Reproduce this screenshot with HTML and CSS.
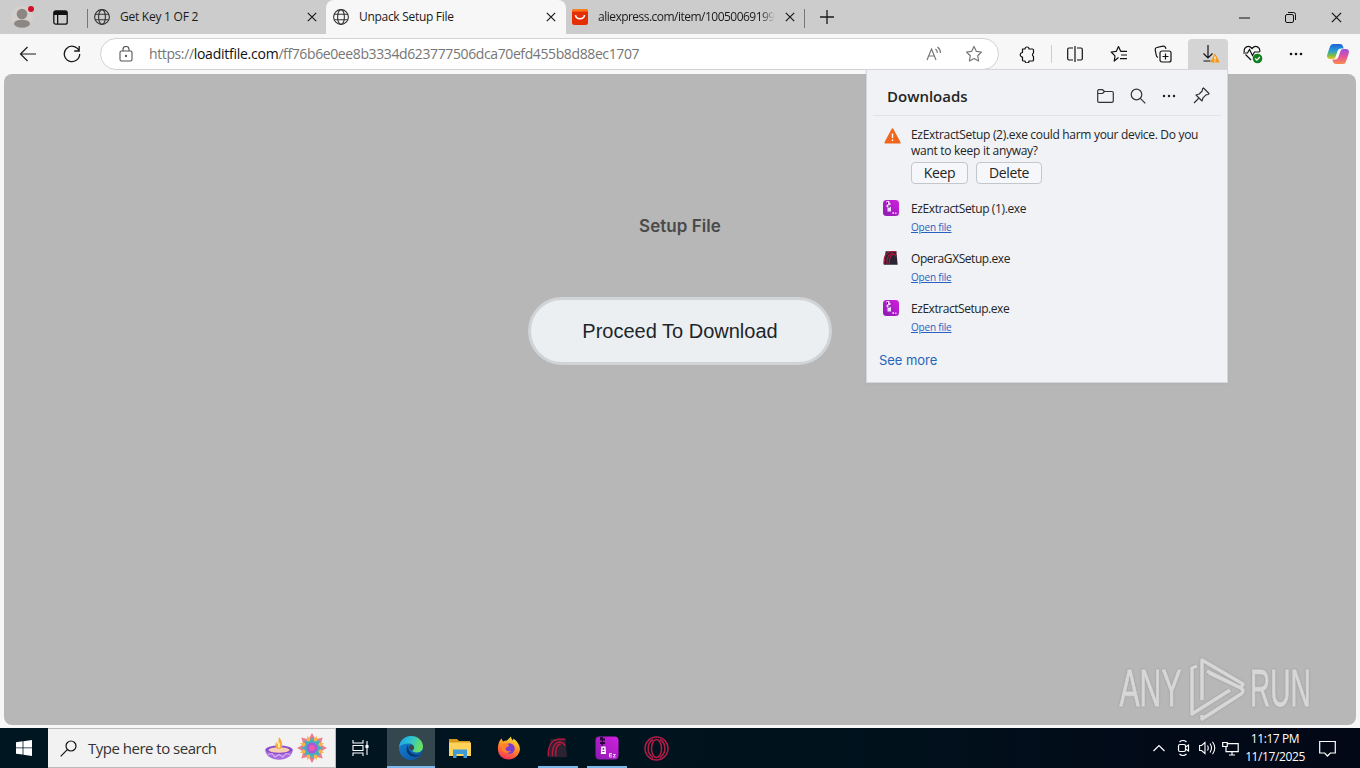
FILE: index.html
```html
<!DOCTYPE html>
<html lang="en">
<head>
<meta charset="utf-8">
<title>Unpack Setup File</title>
<link rel="stylesheet" href="styles.css">
</head>
<body>
<svg class="defs" width="0" height="0">
  <defs>
    <linearGradient id="gEdge" x1="0" y1="0" x2="1" y2=".3"><stop offset="0" stop-color="#1b9de2"/><stop offset=".5" stop-color="#2cc3d2"/><stop offset="1" stop-color="#6adf62"/></linearGradient>
    <linearGradient id="gEdge2" x1="0" y1="0" x2="1" y2="1"><stop offset="0" stop-color="#1686d9"/><stop offset="1" stop-color="#0b4f9e"/></linearGradient>
    <linearGradient id="gEz" x1="0" y1="1" x2="1" y2="0"><stop offset="0" stop-color="#8a1bb0"/><stop offset="1" stop-color="#d31fe0"/></linearGradient>
    <linearGradient id="gFox" x1=".7" y1="0" x2=".3" y2="1"><stop offset="0" stop-color="#ffe63c"/><stop offset=".45" stop-color="#ff9226"/><stop offset="1" stop-color="#fa2c5c"/></linearGradient>
    <linearGradient id="gCop1" x1="0" y1="0" x2="0" y2="1"><stop offset="0" stop-color="#1b62d8"/><stop offset=".45" stop-color="#2a9bd9"/><stop offset=".75" stop-color="#72bf4a"/><stop offset="1" stop-color="#f0c020"/></linearGradient>
    <linearGradient id="gCop2" x1="0" y1="0" x2="0" y2="1"><stop offset="0" stop-color="#9a4fe0"/><stop offset=".5" stop-color="#e4549b"/><stop offset="1" stop-color="#fb8a4c"/></linearGradient>
    <symbol id="globe" viewBox="0 0 16 16"><g fill="none" stroke="#333" stroke-width="1.1"><circle cx="8" cy="8" r="7.4"/><ellipse cx="8" cy="8" rx="3.4" ry="7.4"/><path d="M1.2 5.3h13.6M1.2 10.7h13.6"/></g></symbol>
    <symbol id="x" viewBox="0 0 10 10"><path d="M.8.8l8.4 8.4M9.2.8L.8 9.2" fill="none" stroke="#1a1a1a" stroke-width="1.2"/></symbol>
    <symbol id="ez" viewBox="0 0 24 24"><rect x=".5" y=".5" width="23" height="23" rx="4" fill="url(#gEz)"/><path d="M5 1h3v1.500h2v2H8V6h2v2H8v1.500H6.500V8H5V6h2V4.500H5z" fill="#28053a"/><path d="M6.300 10.500h4.200l.5 7.500H5.800z" fill="#fff"/><path d="M7.600 12h1.600v1.800H7.600zM7.300 15h2.200v1H7.300z" fill="#8a1bb0"/><path d="M17 17.500h-2.500v3.500H17M14.500 19.200H17M18 18.500h2.500L18 21h2.700" fill="none" stroke="#f4d8ff" stroke-width=".9"/></symbol>
    <symbol id="ezs" viewBox="0 0 16 16"><rect width="16" height="16" rx="3.500" fill="url(#gEz)"/><path d="M3.500 1h3v2h1v2h-1v2h1.500v4.500H4.500V7h-1V5h1V3h-1z" fill="#f0d8fb"/><path d="M4 2h1v2H4zM5.500 5h1v3h-1z" fill="#5d177d"/><path d="M9.500 12h1.500v2H9.500zM12 12.500h1.500V14H12z" fill="#f0c8fa"/></symbol>
    <symbol id="gx" viewBox="0 0 24 24"><path d="M4 2h16l2 20H1z" fill="#2b2331"/><path d="M1.500 21C1 10 5 3 13 2.500h7M6 21C5.500 11 9 6 14 5.500c3 0 4.500 2 6 4M9.500 21C9 12 11 8 15 7.500" fill="none" stroke="#b0183c" stroke-width="1.700"/></symbol>
  </defs>
</svg>

<header class="tabs">
  <div class="cell avatar"><svg width="24" height="26" viewBox="0 0 24 26"><circle cx="12" cy="13" r="11" fill="#d3d0cd"/><circle cx="12" cy="10" r="5.300" fill="#8c8782"/><ellipse cx="12" cy="19.700" rx="8" ry="4" fill="#8c8782"/><circle cx="21" cy="5" r="3" fill="#d20f25"/></svg></div>
  <div class="cell work"><svg width="15" height="15" viewBox="0 0 15 15"><rect x=".8" y=".8" width="13.400" height="13.400" rx="2" fill="none" stroke="#111" stroke-width="1.300"/><path d="M1 1h13v4H1zM4 5h1.300v9H4z" fill="#111"/></svg></div>
  <i class="sep"></i>
  <div class="tab first"><svg width="16" height="16"><use href="#globe"/></svg><span class="title key">Get Key 1 OF 2</span><svg class="x" width="10" height="10"><use href="#x"/></svg></div>
  <div class="tab active"><svg width="16" height="16"><use href="#globe"/></svg><span class="title unpack">Unpack Setup File</span><svg class="x" width="10" height="10"><use href="#x"/></svg></div>
  <div class="tab last"><svg width="16" height="16" viewBox="0 0 16 16"><rect width="16" height="16" rx="2.500" fill="#e62e04"/><path d="M2.500 0h11A2.500 2.500 0 0 1 16 2.500H0A2.500 2.500 0 0 1 2.500 0" fill="#ff7a1a"/><path d="M3.500 6c.4 5 8.600 5 9 0" fill="none" stroke="#fff" stroke-width="1.500"/></svg><span class="title ali">aliexpress.com/item/10050069199</span><svg class="x" width="10" height="10"><use href="#x"/></svg></div>
  <i class="sep"></i>
  <div class="cell plus"><svg width="14" height="14" viewBox="0 0 14 14"><path d="M7 0v14M0 7h14" stroke="#1a1a1a" stroke-width="1.300"/></svg></div>
  <div class="window">
    <svg width="11" height="11" viewBox="0 0 11 11"><path d="M0 6h11" stroke="#111"/></svg>
    <svg width="11" height="11" viewBox="0 0 11 11" fill="none" stroke="#111"><rect x=".5" y="2.500" width="8" height="8" rx="1.500"/><path d="M3 .5h5.500a2 2 0 0 1 2 2V8"/></svg>
    <svg width="11" height="11"><use href="#x"/></svg>
  </div>
</header>

<nav class="bar">
  <div class="cell back"><svg width="18" height="16" viewBox="0 0 18 16" fill="none" stroke="#1a1a1a" stroke-width="1.200"><path d="M17 8H1.500M8.500 1l-7 7 7 7"/></svg></div>
  <div class="cell reload"><svg width="18" height="18" viewBox="0 0 18 18" fill="none" stroke="#1a1a1a" stroke-width="1.300"><path d="M15.900 5.500A7.700 7.700 0 1 0 16.700 9M16.200 1v5h-5"/></svg></div>
  <div class="address">
    <svg class="lock" width="14" height="16" viewBox="0 0 14 16" fill="none" stroke="#555" stroke-width="1.100"><rect x="1" y="5" width="12" height="10" rx="1.500"/><path d="M4 5V3.500a3 3 0 0 1 6 0V5"/><circle cx="7" cy="10" r=".6" fill="#555"/></svg>
    <span class="url">https://<b>loaditfile.com</b>/ff76b6e0ee8b3334d623777506dca70efd455b8d88ec1707</span>
    <svg class="read" width="17" height="16" viewBox="0 0 17 16" fill="none" stroke="#777" stroke-width="1.200"><path d="M1 14L5.500 3 10 14M2.700 10h5.700M9.500 3c1.200 1 1.800 2.300 1.900 4M11.500 1c2 1.500 3 3.500 3 6"/></svg>
    <svg width="18" height="18" viewBox="0 0 18 18" fill="none" stroke="#777" stroke-width="1.200" stroke-linejoin="round"><path d="M9 1.500l2.300 4.800 5.200.7-3.800 3.700.9 5.300L9 13.500 4.400 16l.9-5.300L1.500 7l5.200-.7z"/></svg>
  </div>
  <div class="tools">
    <div class="tool ext"><svg width="17" height="17" viewBox="0 0 17 17" fill="none" stroke="#111" stroke-width="1.200" stroke-linejoin="round"><path d="M3.500 3H6a2 2 0 0 1 4 0h3.500q1 0 1 1v3a2 2 0 0 0 0 3.500V14q0 1-1 1H10a2 2 0 0 1-4 0H4.500q-1 0-1-1v-3a2 2 0 0 1 0-4.500z"/></svg></div>
    <i class="rule"></i>
    <div class="tool"><svg width="16" height="16" viewBox="0 0 16 16" fill="none" stroke="#111" stroke-width="1.200"><path d="M8 0v16M6 2H2Q.7 2 .7 3.500v9Q.7 14 2 14h4M10 2h4q1.300 0 1.300 1.500v9Q15.300 14 14 14h-4"/></svg></div>
    <div class="tool"><svg width="18" height="18" viewBox="0 0 18 18" fill="none" stroke="#111" stroke-width="1.200" stroke-linejoin="round"><path d="M8.500 12.500L4.200 16l.8-5.200L1.200 7l5.100-.7L8.500 1.500l2.200 4.800H17M11 10h6M10 13.700h7"/></svg></div>
    <div class="tool"><svg width="18" height="18" viewBox="0 0 18 18" fill="none" stroke="#111" stroke-width="1.200"><rect x="6" y="6" width="11" height="11" rx="2"/><path d="M11.500 8.500v6M8.500 11.500h6M4 12.500Q2.500 12 2.200 10L1.200 4.800Q1 3 2.800 2.500L9 1.200q2-.2 2.700 1.800l.2.800"/></svg></div>
    <div class="tool download"><svg width="20" height="20" viewBox="0 0 20 20" fill="none" stroke="#111" stroke-width="1.200"><path d="M8 1v13M3.500 9.500L8 14l4.500-4.500M3.500 17h7"/><path d="M15 10.500l4 7.500h-8z" fill="#f49b1e" stroke="#f49b1e" stroke-linejoin="round"/><path d="M15 12.500v3M15 16.500v1" stroke="#fff"/></svg></div>
    <div class="tool heart"><svg width="20" height="20" viewBox="0 0 20 20" fill="none" stroke="#111" stroke-width="1.200"><path d="M8 16L2.500 10.500M1.300 8C.3 3 5.500.5 9 4.500 12.500.5 17.700 3 16.700 8M0 9h4.500L6.500 5.500l3 6L11.500 8h5"/><circle cx="14.500" cy="14.500" r="4.800" fill="#128020" stroke="none"/><path d="M12.200 14.500l1.700 1.700 3-3.200" stroke="#fff"/></svg></div>
    <div class="tool more"><svg width="14" height="4" viewBox="0 0 14 4" fill="#111"><circle cx="2" cy="2" r="1.300"/><circle cx="7" cy="2" r="1.300"/><circle cx="12" cy="2" r="1.300"/></svg></div>
    <div class="tool copilot"><svg width="22" height="20" viewBox="0 0 22 20"><path d="M6 0h7c2 0 2.500 1 3 2.500l.7 2H14c-2 0-2.700.8-3.300 2.500L8.500 13Q8 15 5.500 15H3c-2.500 0-3.500-2-2.700-4.500L3 2.500Q3.700 0 6 0" fill="url(#gCop1)"/><path d="M16 20H9c-2 0-2.500-1-3-2.500l-.7-2H8c2 0 2.700-.8 3.300-2.500L13.500 7q.5-2 3-2H19c2.500 0 3.500 2 2.700 4.500L19 17.500q-.7 2.500-3 2.500" fill="url(#gCop2)"/><path d="M10.700 7L9 12.500h2.300L13 7z" fill="#fff"/></svg></div>
  </div>
</nav>

<main class="frame">
  <section class="page">
    <h1>Setup File</h1>
    <button class="proceed">Proceed To Download</button>
    <svg class="mark" width="200" height="72" viewBox="0 0 200 72">
      <g class="marktext"><text transform="translate(5.500 54) scale(.58 1)">ANY</text><text transform="translate(136 54) scale(.54 1)">RUN</text></g>
      <g fill="none" stroke="#d7d7d7" stroke-width="3.500" stroke-linejoin="round"><path d="M88 48V8l41 24-2 4-32-15"/><path d="M83 14l-5 2v46l38-24"/><path d="M88 63v4l39-25q4-3 0-6L93 19"/></g>
    </svg>
  </section>
</main>

<aside class="popup">
  <div class="phead">
    <h2>Downloads</h2>
    <svg width="17" height="14" viewBox="0 0 17 14" fill="none" stroke="#333" stroke-width="1.200"><path d="M.7 2Q.7.7 2 .7h3.500L7.500 2.500H15q1.300 0 1.300 1.500v8q0 1.300-1.500 1.300H2Q.7 13.300.7 12zM.7 4.500h4.800l2-2"/></svg>
    <svg width="16" height="16" viewBox="0 0 16 16" fill="none" stroke="#333" stroke-width="1.200"><circle cx="6.500" cy="6.500" r="5.300"/><path d="M10.300 10.300l5 5"/></svg>
    <svg class="dots" width="14" height="4" viewBox="0 0 14 4" fill="#222"><circle cx="2" cy="2" r="1.250"/><circle cx="7" cy="2" r="1.250"/><circle cx="12" cy="2" r="1.250"/></svg>
    <svg width="17" height="17" viewBox="0 0 17 17" fill="none" stroke="#333" stroke-width="1.200" stroke-linejoin="round"><path d="M10.500 1l5.500 5.500-1 1-2 .3-3 3L9 14 3 8l3.200-1 3-3 .3-2zM6 11l-5 5"/></svg>
  </div>
  <div class="item warn">
    <svg width="17" height="16" viewBox="0 0 17 16"><path d="M8.500 1.200L15.700 14.600H1.300z" fill="#f1651c" stroke="#f1651c" stroke-width="1.800" stroke-linejoin="round"/><path d="M8.500 5.500v4.500M8.500 11.500v1.500" stroke="#fff" stroke-width="1.400"/></svg>
    <div class="info"><p><span class="l1">EzExtractSetup (2).exe could harm your device. Do you</span><span class="l2">want to keep it anyway?</span></p><div class="buttons"><button class="keep">Keep</button><button class="del">Delete</button></div></div>
  </div>
  <div class="item"><svg width="16" height="16"><use href="#ezs"/></svg><div class="info"><p class="n1">EzExtractSetup (1).exe</p><a>Open file</a></div></div>
  <div class="item"><svg width="16" height="16"><use href="#gx"/></svg><div class="info"><p class="n2">OperaGXSetup.exe</p><a>Open file</a></div></div>
  <div class="item"><svg width="16" height="16"><use href="#ezs"/></svg><div class="info"><p class="n3">EzExtractSetup.exe</p><a>Open file</a></div></div>
  <a class="see">See more</a>
</aside>

<footer class="taskbar">
  <div class="start"><svg width="16" height="16" viewBox="0 0 16 16" fill="#fff"><path d="M0 2.300L6.600 1.300V7.500H0zM7.400 1.200L16 0v7.500H7.400zM0 8.300h6.600v6.300L0 13.700zM7.400 8.300H16V16l-8.600-1.200z"/></svg></div>
  <div class="search">
    <svg width="17" height="17" viewBox="0 0 17 17" fill="none" stroke="#111" stroke-width="1.200"><circle cx="11" cy="6" r="5"/><path d="M7.300 9.700L.7 16.300"/></svg>
    <span>Type here to search</span>
    <svg width="28" height="24" viewBox="0 0 28 24"><ellipse cx="14" cy="14" rx="13.700" ry="4.500" fill="#8a4cc9"/><ellipse cx="14" cy="14" rx="10.500" ry="2.800" fill="#f6d0b0"/><path d="M.3 14q3 4 13.700 4t13.700-4c0 5.500-6 9.700-13.700 9.700S.3 19.500.3 14" fill="#a86be0"/><path d="M3 18.500l4-1 3 3.500 4-2.500 4 2.500 3-3.500 4 1" fill="none" stroke="#d9b5f5" stroke-width="1.100"/><path d="M14 1c4.500 5 4 12 0 12s-4-4-3-7c1 1 1 2 2 2 1-2 0-4 1-7" fill="#f8a93a"/><path d="M14 6c2 3 1 6 0 6s-2-3 0-6" fill="#fff0a0"/></svg>
    <svg width="32" height="32" viewBox="-16 -16 32 32"><g fill="#ef7c8f"><path d="M0-15l4 7-4 5-4-5zM0 15l4-7-4-5-4 5zM15 0l-7 4-5-4 5-4zM-15 0l7 4 5-4-5-4z"/><path transform="rotate(45)" d="M0-15l4 7-4 5-4-5zM0 15l4-7-4-5-4 5zM15 0l-7 4-5-4 5-4zM-15 0l7 4 5-4-5-4z"/></g><g fill="#f6b742"><path transform="rotate(22.500)" d="M0-13l4 9 9 4-9 4L0 13l-4-9-9-4 9-4z"/><path transform="rotate(67.500)" d="M0-13l4 9 9 4-9 4L0 13l-4-9-9-4 9-4z"/></g><g fill="#45afc0"><path d="M0-11L4-4l7 4-7 4-4 7-4-7-7-4 7-4z"/><path transform="rotate(45)" d="M0-11L4-4l7 4-7 4-4 7-4-7-7-4 7-4z"/></g><circle r="5.500" fill="#a45bd8"/><circle r="3" fill="#ec58b4"/></svg>
  </div>
  <div class="app"><svg width="17" height="16" viewBox="0 0 17 16" fill="none" stroke="#fff" stroke-width="1.100"><path d="M1 0v3h10V0M1 16v-3h10v3M1 5.500h10v5H1zM15 1v14"/><path d="M13.500 5h3v3h-3z" fill="#fff" stroke="none"/></svg></div>
  <div class="app current"><svg width="24" height="24" viewBox="0 0 24 24"><circle cx="12" cy="12" r="12" fill="url(#gEdge2)"/><path d="M.1 11C1 4 6 0 12 0c7 0 12 5 12 10.500 0 4-3 6-6.500 6-3 0-4.500-1.200-4-2.200 3-2.300 1.500-6.800-3.500-6.800C5 7.500 1.500 9 .1 11" fill="url(#gEdge)"/><path d="M9 9c-3 4-1 10.500 5 11.500 3 .5 6-.5 8.200-3-1 1-3 1.700-5 1.500C12 18.500 9 15 9 9" fill="#07366d"/><path d="M13.500 14.300c3-2.300 1.500-5.300-2-5.300-3 1-2 4.500 2 5.300" fill="#36484e"/></svg></div>
  <div class="app"><svg width="22" height="20" viewBox="0 0 22 20"><path d="M0 1h8l2 2h11v15H0z" fill="#d99a1c"/><path d="M0 4.500h22V18H0z" fill="#ffd35a"/><path d="M4 11.500h14V20h-3.500v-4h-7v4H4z" fill="#3f9bd6"/></svg></div>
  <div class="app"><svg width="24" height="24" viewBox="0 0 24 24"><path d="M1.500 8C2 5.500 3 4 4.500 2.500L6 5.500q2-1 4-1l4-4c0 2 1 3 2 4l.5-2c5 4 7 8 6.300 12C21.500 20 17 23.500 12 23.500 4 23.500-1 17 1.500 8" fill="url(#gFox)"/><circle cx="12.500" cy="12.500" r="5.200" fill="#7b3bd6"/><path d="M5 9c3-2 5-1 7 0 0 2-3 2-3.500 3.500 0 2.500 3 3.500 5.500 2-2 4-8 3-9-1z" fill="#ff8226"/></svg></div>
  <div class="app open gxapp"><svg width="22" height="22"><use href="#gx"/></svg></div>
  <div class="app open"><svg width="24" height="24"><use href="#ez"/></svg></div>
  <div class="app"><svg width="25" height="25" viewBox="0 0 25 25" fill="none" stroke="#b31c48" stroke-width="1.500"><circle cx="12.500" cy="12.500" r="11.500"/><ellipse cx="12.500" cy="12.500" rx="5" ry="9"/><path d="M9 3.500c-6.500 4-6.500 14 0 18M16 3.500c6.500 4 6.500 14 0 18"/></svg></div>
  <div class="tray">
    <svg width="12" height="8" viewBox="0 0 12 8" fill="none" stroke="#fff" stroke-width="1.200"><path d="M.5 7L6 1.500 11.500 7"/></svg>
    <svg width="13" height="16" viewBox="0 0 13 16" fill="none" stroke="#fff" stroke-width="1.200"><rect x="1.500" y="4.500" width="7" height="7" rx="1.500"/><path d="M8.500 7l3-2v6l-3-2M2.500 2Q6-1 9.500 2M2.500 14q3.500 3 7 0"/></svg>
    <svg width="17" height="14" viewBox="0 0 17 14" fill="none" stroke="#fff" stroke-width="1.100"><path d="M.6 4.500h2L6 1.500v11L2.600 9.500h-2zM8.500 4.500q1.500 2.500 0 5M11 2.500q3 4.500 0 9M13.500.7q4.500 6.300 0 12.600"/></svg>
    <svg width="17" height="15" viewBox="0 0 17 15" fill="none" stroke="#fff" stroke-width="1.200"><path d="M5.500 2.600h10.700v8H4V6M7 14h6M10 10.600V14M.7 1.500h4.500v4H.7z"/></svg>
    <div class="clock"><span class="time">11:17 PM</span><span class="date">11/17/2025</span></div>
    <svg width="17" height="17" viewBox="0 0 17 17" fill="none" stroke="#fff" stroke-width="1.200"><path d="M.7 1.500h15.600v11.500h-5L8.500 16 5.700 13h-5z"/></svg>
  </div>
</footer>
</body>
</html>
```
FILE: styles.css
```css
* { box-sizing: border-box; }
body {
  margin: 0; width: 1360px; height: 768px; overflow: hidden;
  display: flex; flex-direction: column; position: relative;
  background: #f7f7f7; color: #1a1a1a;
  font: 12px/16px "Open Sans", "Noto Sans", sans-serif;
}
.defs { position: absolute; }
svg { flex: none; display: block; }
h1, h2, p { margin: 0; }
button { font-family: inherit; padding: 0; margin: 0; white-space: nowrap; }
.cell { display: flex; align-items: center; justify-content: center; }

.tabs { height: 34px; flex: none; display: flex; align-items: center; background: #ccc; }
.avatar { width: 44px; }
.work { width: 32px; margin-right: 11px; }
.sep { width: 1px; height: 19px; background: #777; margin-top: 2px; }
.tab { height: 34px; display: flex; align-items: center; gap: 10px; white-space: nowrap; }
.tab .x { margin-left: auto; }
.first { width: 238px; padding: 0 9px 0 6px; }
.active { width: 240px; padding: 0 10px 0 7px; background: #f7f7f7; border-radius: 8px 8px 0 0; }
.last { width: 238px; padding: 0 9px 0 6px; }
.key { letter-spacing: -.25px; }
.unpack { letter-spacing: -.3px; }
.ali {
  letter-spacing: -.52px;
  -webkit-mask-image: linear-gradient(90deg, #000 92%, transparent);
  mask-image: linear-gradient(90deg, #000 92%, transparent);
}
.plus { width: 43px; }
.window { margin-left: auto; display: flex; gap: 35px; padding-right: 18px; }

.bar { height: 40px; flex: none; display: flex; align-items: center; background: #f7f7f7; }
.back { width: 56px; }
.reload { width: 32px; margin-right: 12px; }
.address {
  width: 899px; height: 32px; display: flex; align-items: center;
  padding: 0 15px 0 18px; border: 1px solid #d2d2d2; border-radius: 16px; background: #fff;
}
.url { margin: 0 auto 0 16px; font-size: 14px; letter-spacing: -.39px; color: #767676; white-space: nowrap; }
.url b { font-weight: 400; color: #111; letter-spacing: -.25px; }
.read { margin-right: 22px; }
.tools { display: flex; align-items: center; padding-left: 6px; }
.tool { width: 44px; height: 31px; display: flex; align-items: center; justify-content: center; }
.rule { width: 1px; height: 18px; background: #ccc; margin: 0 1px 0 2px; }
.download { width: 40px; background: #d4d4d4; border-radius: 4px 4px 0 0; margin: 0 3px; padding-left: 3px; }
.heart { width: 43px; padding-left: 1px; }
.copilot { width: 40px; }

.frame { height: 654px; flex: none; padding: 0 4px 3px; }
.page {
  height: 651px; position: relative; border-radius: 8px; background: #b7b7b7;
  display: flex; flex-direction: column; align-items: center; padding-top: 139px;
}
.page h1 { font: 600 17px/27px Inter, sans-serif; letter-spacing: .05px; color: #4a4a4a; margin-bottom: 57px; }
.proceed {
  width: 304px; height: 68px; border: 3px solid #d1d4d6; border-radius: 34px;
  background: #ebeff2; color: #212529; font: 20px/30px "Liberation Sans", Arial, sans-serif;
}
.mark { position: absolute; right: 42px; bottom: 1px; overflow: visible; filter: drop-shadow(0 0 1px #999); }
.marktext { font: 52px "Liberation Sans", sans-serif; fill: #d7d7d7; stroke: #d7d7d7; stroke-width: .8px; }

.popup {
  position: absolute; left: 866px; top: 69px; width: 362px; height: 314px;
  background: #f0f2f6; border: 1px solid #d5d7da; color: #242424;
  box-shadow: 0 1px 2px #9a9a9a44;
}
.phead { height: 46px; margin: 0 6px; padding: 6px 11px 0 14px; display: flex; align-items: center; gap: 16px; border-bottom: 1px solid #e1e3e7; }
.phead h2 { font-size: 15px; line-height: 22px; font-weight: 600; letter-spacing: 0; margin-right: auto; }
.dots { margin: 0 1px 0 0; }
.item { display: flex; height: 50px; padding: 14px 12px 0 16px; gap: 12px; }
.item p { line-height: 16px; font-size: 12px; white-space: nowrap; letter-spacing: -.31px; }
.item p.n1 { letter-spacing: -.38px; }
.item p.n2 { letter-spacing: -.43px; }
.item p.n3 { letter-spacing: -.45px; }
.item p span { display: block; }
.item .l2 { letter-spacing: -.28px; }
.item a { display: block; margin-top: 3px; font-size: 10px; line-height: 14px; color: #2b5fc2; text-decoration: underline; letter-spacing: -.2px; }
.item .info { padding-top: 1px; }
.warn { height: 70px; padding: 12px 12px 0 17px; gap: 10px; }
.item.warn .info { padding: 0; margin-top: -1px; }
.buttons { display: flex; gap: 8px; margin-top: 3px; }
.buttons button { height: 22px; border: 1px solid #c3c6cb; border-radius: 4px; background: #f6f7fa; color: #242424; font-size: 14px; line-height: 18px; letter-spacing: -.35px; }
.keep { width: 57px; }
.del { width: 66px; }
.see { display: block; margin: 15px 0 0 12px; font: 13px/18px Inter, sans-serif; letter-spacing: -.05px; color: #2864b8; }

.taskbar { height: 40px; flex: none; display: flex; color: #fff; background: linear-gradient(90deg, #001722, #00131d 60%, #020a18 85%, #020816); }
.start { width: 48px; display: flex; align-items: center; justify-content: center; }
.search { width: 288px; display: flex; align-items: center; padding: 0 7px 0 12px; background: #f2f2f2; border: 1px solid #bbb; border-left: 0; color: #333; font-size: 15px; }
.search span { margin: 0 auto 0 11px; letter-spacing: -.5px; white-space: nowrap; }
.search svg + svg { margin-left: 4px; }
.search svg:last-child { margin-left: 3px; }
.app { width: 49px; display: flex; align-items: center; justify-content: center; }
.current { width: 48px; margin-left: 2px; background: #34474e; border-bottom: 2px solid #79b8e8; padding-top: 2px; }
.open { width: 40px; margin: 0 5px 0 4px; border-bottom: 2px solid #79b8e8; padding-top: 2px; }
.gxapp { margin-left: 5px; }
.tray { margin-left: auto; display: flex; align-items: center; padding-right: 24px; gap: 15px; }
.tray > svg:nth-child(2) { margin-left: -3px; }
.tray > svg:nth-child(3) { margin-left: -6px; }
.tray > svg:nth-child(4) { margin-left: -9px; }
.clock { width: 58px; margin-left: -8px; font-size: 12px; line-height: 18px; display: flex; flex-direction: column; align-items: center; white-space: nowrap; letter-spacing: -.4px; }
```
